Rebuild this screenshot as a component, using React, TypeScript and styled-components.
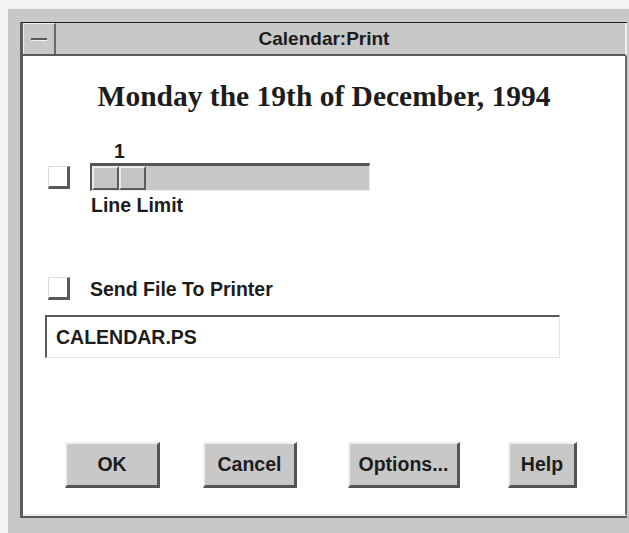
import styled, { createGlobalStyle } from 'styled-components';

const GlobalStyle = createGlobalStyle`
  html, body {
    margin: 0;
    padding: 0;
    background: #f3f3f3;
  }
  body {
    font-family: 'Liberation Sans', Arial, sans-serif;
    color: #1c1c1c;
  }
`;

const S = {
  Window: styled.div`
    box-sizing: border-box;
    width: 621px;
    height: 524px;
    margin: 9px 0 0 8px;
    padding: 13px 2px 0 12px;
    background: #c8c8c8;
  `,
  Panel: styled.div`
    display: flex;
    flex-direction: column;
    height: 496px;
    border-top: 1px solid #1e1e1e;
    border-left: 3px solid #5c5c5c;
    border-bottom: 2px solid #5c5c5c;
    box-sizing: border-box;
  `,
  TitleBar: styled.div`
    display: flex;
    height: 31px;
    background: #c8c8c8;
    border-bottom: 2px solid #5a5a5a;
    border-right: 2px solid #efefef;
  `,
  MenuButton: styled.div`
    display: flex;
    align-items: center;
    justify-content: center;
    width: 30px;
    border-top: 1px solid #efefef;
    border-left: 1px solid #efefef;
    border-right: 2px solid #6a6a6a;
  `,
  MenuGlyph: styled.span`
    width: 16px;
    height: 2px;
    background: #5a5a5a;
    border-bottom: 1px solid #f2f2f2;
  `,
  Title: styled.div`
    flex: 1;
    display: flex;
    align-items: center;
    justify-content: center;
    padding-right: 33px;
    font-size: 19px;
    font-weight: 700;
  `,
  Content: styled.div`
    flex: 1;
    display: flex;
    flex-direction: column;
    padding: 24px 22px 0;
    background: #fff;
    border-right: 2px solid #6a6a6a;
    border-bottom: 2px solid #ececec;
  `,
  Heading: styled.h1`
    margin: 0;
    font-family: 'Liberation Serif', 'Times New Roman', serif;
    font-size: 29.5px;
    line-height: 33px;
    font-weight: 700;
    text-align: center;
  `,
  Label: styled.div<{ $top?: number }>`
    font-size: 19.5px;
    font-weight: 700;
    line-height: 22px;
    margin-top: ${({ $top }) => $top ?? 0}px;
  `,
  ValueLabel: styled.div`
    width: 55px;
    margin: 27px 0 1px 47px;
    text-align: center;
    font-size: 19.5px;
    font-weight: 700;
    line-height: 22px;
  `,
  Row: styled.div<{ $top?: number }>`
    display: flex;
    align-items: center;
    gap: 20px;
    margin-top: ${({ $top }) => $top ?? 0}px;
  `,
  Checkbox: styled.span`
    box-sizing: border-box;
    width: 22px;
    height: 23px;
    margin-left: 3px;
    background: #fff;
    border-top: 1px solid #dcdcdc;
    border-left: 1px solid #dcdcdc;
    border-right: 3px solid #5a5a5a;
    border-bottom: 3px solid #5a5a5a;
  `,
  Track: styled.div`
    box-sizing: border-box;
    display: flex;
    width: 280px;
    height: 28px;
    background: #c8c8c8;
    border-top: 3px solid #555;
    border-left: 2px solid #555;
    border-right: 1px solid #ececec;
    border-bottom: 1px solid #ececec;
  `,
  ThumbHalf: styled.span`
    box-sizing: border-box;
    width: 27px;
    height: 100%;
    background: #c4c4c4;
    border-top: 2px solid #ededed;
    border-left: 2px solid #ededed;
    border-right: 2px solid #5a5a5a;
    border-bottom: 2px solid #5a5a5a;
  `,
  Indented: styled.div`
    padding-left: 46px;
  `,
  Field: styled.div`
    box-sizing: border-box;
    display: flex;
    align-items: center;
    width: 515px;
    height: 43px;
    margin-top: 15px;
    padding-left: 9px;
    border-top: 2px solid #5a5a5a;
    border-left: 2px solid #5a5a5a;
    border-right: 1px solid #e4e4e4;
    border-bottom: 1px solid #e4e4e4;
    font-size: 19.5px;
    font-weight: 700;
  `,
  Buttons: styled.div`
    display: flex;
    margin-top: 84px;
    margin-left: -22px;
  `,
  Button: styled.button<{ $w: number; $lead: number }>`
    box-sizing: border-box;
    width: ${({ $w }) => $w}px;
    height: 46px;
    margin-left: ${({ $lead }) => $lead}px;
    padding: 0;
    background: #c8c8c8;
    border-top: 2px solid #f0f0f0;
    border-left: 2px solid #f0f0f0;
    border-right: 3px solid #555;
    border-bottom: 3px solid #555;
    font-family: 'Liberation Sans', Arial, sans-serif;
    font-size: 19.5px;
    font-weight: 700;
    color: #1c1c1c;
  `,
};

const buttons = [
  { label: 'OK', w: 95, lead: 42 },
  { label: 'Cancel', w: 94, lead: 43 },
  { label: 'Options...', w: 112, lead: 51 },
  { label: 'Help', w: 69, lead: 48 },
];

const App = () => {
  return (
    <>
      <GlobalStyle />
      <S.Window>
        <S.Panel>
          <S.TitleBar>
            <S.MenuButton>
              <S.MenuGlyph />
            </S.MenuButton>
            <S.Title>Calendar:Print</S.Title>
          </S.TitleBar>
          <S.Content>
            <S.Heading>Monday the 19th of December, 1994</S.Heading>
            <S.ValueLabel>1</S.ValueLabel>
            <S.Row>
              <S.Checkbox />
              <S.Track>
                <S.ThumbHalf />
                <S.ThumbHalf />
              </S.Track>
            </S.Row>
            <S.Indented>
              <S.Label $top={3}>Line Limit</S.Label>
            </S.Indented>
            <S.Row $top={61}>
              <S.Checkbox />
              <S.Label>Send File To Printer</S.Label>
            </S.Row>
            <S.Field>CALENDAR.PS</S.Field>
            <S.Buttons>
              {buttons.map((b) => (
                <S.Button key={b.label} $w={b.w} $lead={b.lead}>
                  {b.label}
                </S.Button>
              ))}
            </S.Buttons>
          </S.Content>
        </S.Panel>
      </S.Window>
    </>
  );
};

export default App;
